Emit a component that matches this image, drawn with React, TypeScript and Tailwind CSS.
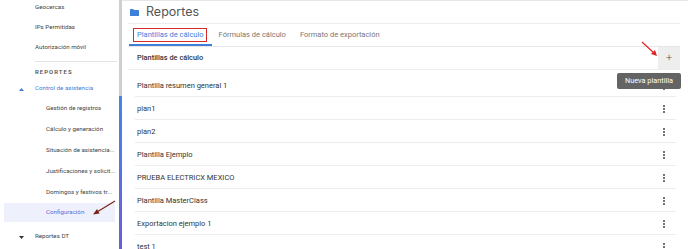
const subItems = [
  "Gestión de registros",
  "Cálculo y generación",
  "Situación de asistencia...",
  "Justificaciones y solicit...",
  "Domingos y festivos tr...",
];

const templates = [
  "Plantilla resumen general 1",
  "plan1",
  "plan2",
  "Plantilla Ejemplo",
  "PRUEBA ELECTRICX MEXICO",
  "Plantilla MasterClass",
  "Exportacion ejemplo 1",
  "test 1",
];

function Caret({ up, className }: { up?: boolean; className?: string }) {
  return (
    <svg width="5" height="3" viewBox="0 0 5 3" className={className}>
      {up ? (
        <path d="M0 3 L2.5 0 L5 3 Z" fill="currentColor" />
      ) : (
        <path d="M0 0 L2.5 3 L5 0 Z" fill="currentColor" />
      )}
    </svg>
  );
}

function Kebab() {
  return (
    <div className="flex flex-col items-center gap-[1.5px]">
      <span className="h-[1.6px] w-[1.6px] rounded-full bg-[#444]" />
      <span className="h-[1.6px] w-[1.6px] rounded-full bg-[#444]" />
      <span className="h-[1.6px] w-[1.6px] rounded-full bg-[#444]" />
    </div>
  );
}

function Sidebar() {
  return (
    <aside className="flex w-[119px] shrink-0 flex-col whitespace-nowrap bg-white text-[6.2px] text-[#444]">
      <div className="-mt-[2px] flex flex-col">
        {["Geocercas", "IPs Permitidas", "Autorización móvil"].map((t) => (
          <div key={t} className="flex h-[20px] shrink-0 items-center pl-[35px]">
            {t}
          </div>
        ))}
      </div>
      <div className="ml-[35px] mr-[2px] mt-[3px] border-t border-[#e4e4e4]" />
      <div className="flex h-[18px] shrink-0 items-center pl-[35px] text-[6px] font-semibold tracking-[1px] text-[#555]">
        REPORTES
      </div>
      <div className="flex h-[18px] shrink-0 items-center text-[#3d7fd9]">
        <Caret up className="ml-[19px] mr-[11px]" />
        Control de asistencia
      </div>
      {subItems.map((t) => (
        <div key={t} className="flex h-[21px] shrink-0 items-center pl-[46px]">
          {t}
        </div>
      ))}
      <div className="mx-[4px] flex h-[19px] shrink-0 items-center bg-[#eef0fc] pl-[42px] text-[#5d6fd6]">
        Configuración
      </div>
      <div className="flex h-[30px] shrink-0 items-center">
        <Caret className="ml-[19px] mr-[11px] text-[#333]" />
        Reportes DT
      </div>
    </aside>
  );
}

export default function App() {
  return (
    <div
      className="relative flex h-[249px] w-[688px] overflow-hidden bg-white"
      style={{ fontFamily: "Roboto, 'Noto Sans', sans-serif" }}
    >
      <Sidebar />
      <div className="flex w-[3px] shrink-0 flex-col">
        <div className="h-[96px] bg-[#cfcfcf]" />
        <div className="flex-1 bg-gradient-to-b from-[#3f86e6] to-[#6a5cd8]" />
      </div>
      <main className="flex flex-1 flex-col border-t border-[#e6e6e6] pl-[6px] pr-[8px]">
        <header className="flex h-[23px] shrink-0 items-center border-b border-[#ececec] pl-[2px]">
          <svg width="9" height="7" viewBox="0 0 9 7" className="mr-[7px]">
            <path d="M0 0.6 Q0 0 0.6 0 H3.2 L4 1 H8.4 Q9 1 9 1.6 V6.4 Q9 7 8.4 7 H0.6 Q0 7 0 6.4 Z" fill="#3d7fd9" />
          </svg>
          <span className="text-[12.5px] text-[#555]" style={{ fontFamily: "Inter, sans-serif" }}>
            Reportes
          </span>
        </header>
        <nav className="relative flex h-[23px] shrink-0 items-stretch border-b border-[#e6e6e6] pl-[1px] text-[7.5px]">
          <div className="flex items-center border-b-2 border-[#3d7fd9] px-[8px] pt-[1px] text-[#3d7fd9]">
            Plantillas de cálculo
          </div>
          <div className="flex items-center px-[7px] text-[#777]">Fórmulas de cálculo</div>
          <div className="flex items-center px-[7px] text-[#777]">Formato de exportación</div>
          <div className="absolute left-[5px] top-[4px] h-[14px] w-[74px] border-[1.5px] border-[#d42a2a]" />
        </nav>
        <div className="flex h-[23px] shrink-0 items-center justify-between border-b border-[#ececec] pl-[9px] text-[7.4px] font-medium text-[#333]">
          Plantillas de cálculo
          <div className="flex h-[22px] w-[22px] items-center justify-center bg-[#eeeeee] text-[11px] font-light text-[#555]">
            +
          </div>
        </div>
        <ul className="mt-[4px] flex shrink-0 flex-col pl-[7px] pr-[4px] text-[7.5px] text-[#333]">
          {templates.map((t) => (
            <li
              key={t}
              className="flex h-[23px] shrink-0 items-center justify-between border-b border-[#ececec] pl-[2px] pr-[11px] pt-[2px]"
            >
              {t}
              <Kebab />
            </li>
          ))}
        </ul>
      </main>
      <div className="absolute left-[617px] top-[73px] flex h-[16px] w-[64px] items-center justify-center rounded-[2px] bg-[#646464] text-[7.3px] text-white">
        Nueva plantilla
      </div>
      <svg className="absolute left-0 top-0" width="688" height="249" viewBox="0 0 688 249">
        <line x1="642" y1="42" x2="654" y2="53" stroke="#e02424" strokeWidth="1.2" />
        <path d="M657 56 L651 54 L655 50 Z" fill="#e02424" />
        <line x1="115" y1="201" x2="97" y2="212" stroke="#7a2418" strokeWidth="1.2" />
        <path d="M93 214.5 L97 209 L99.5 213.5 Z" fill="#7a2418" />
      </svg>
    </div>
  );
}
